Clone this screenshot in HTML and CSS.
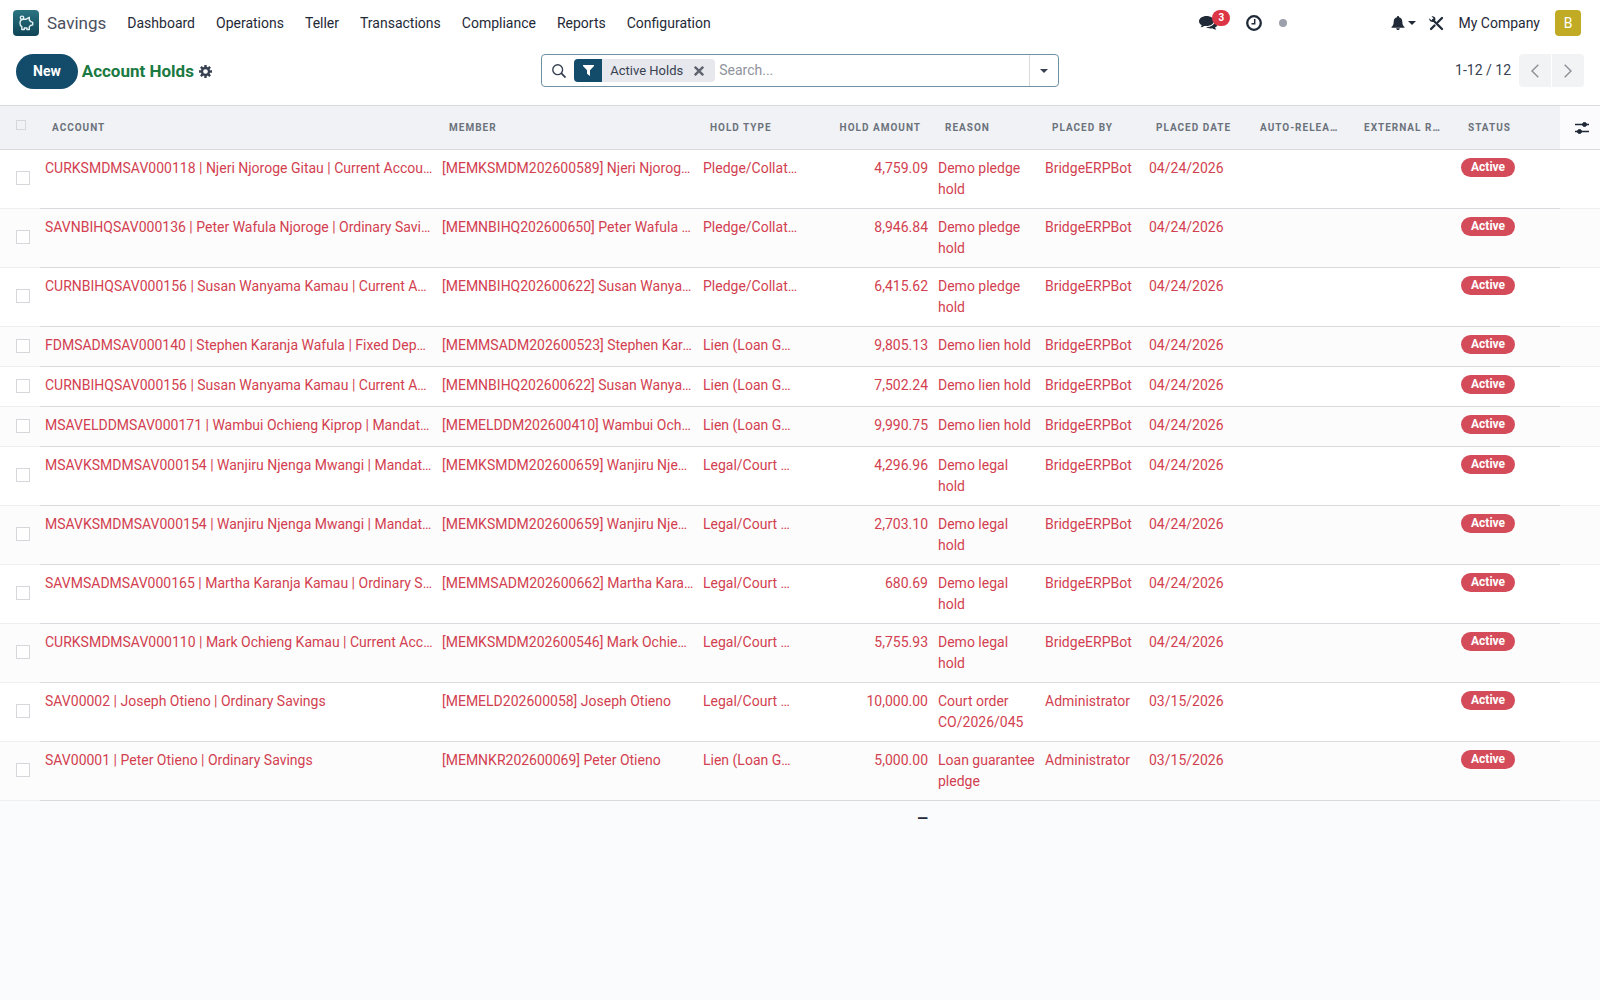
FILE: index.html
```html
<!DOCTYPE html>
<html lang="en">
<head>
    <meta charset="UTF-8">
    <meta name="viewport" content="width=device-width, initial-scale=1.0">
    <title>Account Holds - Savings</title>
    <link rel="stylesheet" href="styles.css">
</head>
<body>
    <header class="navbar">
        <a href="#" class="brand">
            <svg class="app-icon" width="26" height="26" viewBox="0 0 26 26">
                <defs><linearGradient id="app-bg" x1="0" y1="0" x2="0" y2="1"><stop offset="0" stop-color="#2a7481"/><stop offset="1" stop-color="#0f4456"/></linearGradient></defs>
                <rect width="26" height="26" rx="4" fill="url(#app-bg)"/>
                <g fill="none" stroke="#e3f1f3" stroke-width="1.4" stroke-linejoin="round" stroke-linecap="round">
                    <path d="M10.500 9.200h2.700l3.100-1.900v2.700l1.500 1.700 1.900.6v2.600l-2.200.6-1.200 1.400v2.600h-2.400v-1.500h-2.600v1.500H8.800v-2.800C7.600 15.900 7 14.700 7 13.200c0-2.300 1.500-4 3.500-4z"/>
                    <circle cx="9" cy="7.800" r="1.700"/>
                </g>
            </svg>
            <span>Savings</span>
        </a>
        <nav class="menu">
            <a href="#">Dashboard</a>
            <a href="#">Operations</a>
            <a href="#">Teller</a>
            <a href="#">Transactions</a>
            <a href="#">Compliance</a>
            <a href="#">Reports</a>
            <a href="#">Configuration</a>
        </nav>
        <div class="systray">
            <button class="icon-btn chat" aria-label="Messages">
                <svg width="19" height="16" viewBox="0 0 19 16" fill="#1f2937"><path d="M7.500 1C3.400 1 0 3.300 0 6.200c0 1.700 1.100 3.100 2.800 4-.2.800-.7 1.400-1.300 2 1.400-.1 2.700-.5 3.800-1.300.7.200 1.500.2 2.200.2 4.100 0 7.500-2.200 7.500-5S11.600 1 7.500 1z"/><path d="M16 5.200c0 4-3.700 6.800-8.900 7 1.400.9 3.800 1.500 6 1 1.300.8 2.500 1.300 4.200 1.400-.7-.6-1.100-1.200-1.300-2 1.500-.8 2.400-2 2.400-3.400 0-1.600-.9-3-2.400-4z"/></svg>
                <span class="count">3</span>
            </button>
            <button class="icon-btn clock" aria-label="Activities">
                <svg width="16" height="16" viewBox="0 0 16 16" fill="none" stroke="#1f2937"><circle cx="8" cy="8" r="6.800" stroke-width="2.300"/><path d="M8.700 4v4.800H5.500" stroke-width="1.500"/></svg>
            </button>
            <span class="dot"></span>
            <button class="icon-btn bell" aria-label="Notifications">
                <svg width="14" height="14" viewBox="0 0 14 14" fill="#1f2937"><path d="M7 0c.6 0 1 .4 1 1v.3c2 .4 3.300 2 3.300 4.200 0 2.700.6 4.200 2.200 5.500v.7H.5V11c1.600-1.300 2.200-2.800 2.200-5.500C2.700 3.300 4 1.700 6 1.300V1c0-.6.400-1 1-1zM5.200 12.200h3.600C8.700 13.300 8 14 7 14s-1.700-.7-1.800-1.800z"/></svg>
                <svg width="8" height="4" viewBox="0 0 8 4"><path d="M0 0h8L4 4z" fill="#1f2937"/></svg>
            </button>
            <button class="icon-btn tools" aria-label="Developer tools">
                <svg width="15" height="15" viewBox="0 0 15 15"><path d="M4 4l9 9M13 2L9 6M5.500 9.500L2 13" fill="none" stroke="#1f2937" stroke-width="2.300" stroke-linecap="round"/><path d="M.2 2.200L2.400 4.200 4 3.800 4.400 2.200 2.500.3c2-.6 4.200.8 4 3.300L4.700 6C2.200 6.400-.2 4.700.2 2.200z" fill="#1f2937"/></svg>
            </button>
            <button class="company">My Company</button>
            <button class="avatar" aria-label="User menu">B</button>
        </div>
    </header>

    <div class="control-panel">
        <div class="breadcrumb">
            <button class="new-btn">New</button>
            <h1>Account Holds</h1>
            <button class="icon-btn gear" aria-label="Actions">
                <svg width="13" height="13" viewBox="0 0 14 14"><g fill="none" stroke="#374151"><circle cx="7" cy="7" r="3.800" stroke-width="2.500"/><path d="M7 0v3M7 11v3M0 7h3M11 7h3M2 2l2.200 2.200M9.800 9.800L12 12M12 2L9.800 4.200M4.200 9.800L2 12" stroke-width="2.600"/></g></svg>
            </button>
        </div>
        <div class="search">
            <svg class="lens" width="14" height="14" viewBox="0 0 14 14" fill="none" stroke="#374151"><circle cx="5.700" cy="5.700" r="4.900" stroke-width="1.400"/><path d="M9.200 9.200l4.300 4.300" stroke-width="1.800"/></svg>
            <div class="facet">
                <span class="facet-icon"><svg width="11" height="11" viewBox="0 0 11 11" fill="#fff"><path d="M0 0h11v1L7 5.200V11L4 8.800V5.200L0 1z"/></svg></span>
                <span class="facet-label">Active Holds</span>
                <button class="icon-btn facet-remove" aria-label="Remove filter"><svg width="10" height="10" viewBox="0 0 10 10" stroke="#5f636f" stroke-width="2.400"><path d="M.8.8l8.400 8.400M9.200.8L.8 9.200"/></svg></button>
            </div>
            <input type="text" class="search-input" placeholder="Search..." aria-label="Search">
            <button class="search-toggle" aria-label="Toggle search panel"><svg width="8" height="4" viewBox="0 0 8 4" fill="#374151"><path d="M0 0h8L4 4z"/></svg></button>
        </div>
        <div class="pager">
            <span>1-12 / 12</span>
            <div class="pager-buttons">
                <button aria-label="Previous" disabled><svg width="8" height="14" viewBox="0 0 8 14"><path d="M7.300.7L1 7l6.300 6.300"/></svg></button>
                <button aria-label="Next" disabled><svg width="8" height="14" viewBox="0 0 8 14"><path d="M.7.7L7 7 .7 13.300"/></svg></button>
            </div>
        </div>
    </div>

    <table class="list">
        <colgroup>
            <col class="c-check"><col><col class="c-member"><col class="c-std"><col class="c-amount"><col class="c-reason">
            <col class="c-std"><col class="c-std"><col class="c-std"><col class="c-std"><col class="c-std"><col class="c-check">
        </colgroup>
        <thead>
            <tr>
                <th class="check"><input type="checkbox" aria-label="Select all"></th>
                <th>Account</th>
                <th>Member</th>
                <th>Hold Type</th>
                <th class="num">Hold Amount</th>
                <th>Reason</th>
                <th>Placed By</th>
                <th>Placed Date</th>
                <th>Auto-Release Date</th>
                <th>External Reference</th>
                <th>Status</th>
                <th class="options"><button class="icon-btn" aria-label="Optional columns"><svg width="14" height="12" viewBox="0 0 14 12" stroke="#1f2937" fill="#1f2937"><path d="M0 2.500h14M0 9.500h14" stroke-width="1.300"/><circle cx="9.500" cy="2.500" r="2"/><circle cx="4.500" cy="9.500" r="2"/></svg></button></th>
            </tr>
        </thead>
        <tbody id="rows"></tbody>
        <tfoot>
            <tr><td></td><td></td><td></td><td></td><td class="num">—</td><td colspan="7"></td></tr>
        </tfoot>
    </table>

    <script src="script.js"></script>
</body>
</html>
```
FILE: styles.css
```css
* { box-sizing: border-box; }
body {
    margin: 0;
    background: #fafbfd;
    color: #374151;
    font-family: Roboto, "Liberation Sans", sans-serif;
    font-size: 14px;
    line-height: 21px;
}
a { color: inherit; text-decoration: none; }
button, input { font: inherit; color: inherit; }
button {
    padding: 0;
    border: 0;
    background: none;
    cursor: pointer;
}
svg { display: block; }
.icon-btn {
    display: flex;
    align-items: center;
}

/* top bar */
.navbar {
    display: flex;
    align-items: center;
    height: 46px;
    padding: 0 19px 0 13px;
    background: #fff;
    color: #1f2937;
}
.brand {
    display: flex;
    align-items: center;
    gap: 8px;
    margin-right: 21px;
    font-size: 17px;
    color: #4b5060;
}
.menu {
    display: flex;
    gap: 21px;
}
.systray {
    display: flex;
    align-items: center;
    margin-left: auto;
}
.chat { position: relative; }
.count {
    position: absolute;
    left: 13px;
    top: -5px;
    width: 18px;
    height: 16px;
    border-radius: 8px;
    background: #dc3545;
    color: #fff;
    font-size: 10px;
    font-weight: 700;
    line-height: 16px;
    text-align: center;
}
.clock { margin-left: 28px; }
.dot {
    width: 8px;
    height: 8px;
    margin-left: 17px;
    border-radius: 50%;
    background: #9ca0ac;
}
.bell {
    gap: 3px;
    margin-left: 104px;
}
.tools { margin-left: 13px; }
.company { margin-left: 14px; }
.avatar {
    width: 26px;
    height: 26px;
    margin-left: 15px;
    border-radius: 4px;
    background: #c1ab24;
    color: #fff;
}

/* control panel */
.control-panel {
    display: grid;
    grid-template-columns: 1fr 33% 1fr;
    align-items: start;
    padding: 8px 16px 16px;
    background: #fff;
}
.breadcrumb {
    display: flex;
    align-items: center;
}
.new-btn {
    height: 35px;
    padding: 0 17px;
    border-radius: 18px;
    background: #134b6a;
    color: #fff;
    font-weight: 700;
}
h1 {
    margin: 0 5px 0 4px;
    font-size: 17px;
    font-weight: 700;
    color: #1a7a42;
}
.search {
    display: flex;
    align-items: center;
    height: 33px;
    border: 1px solid #6f91a3;
    border-radius: 4px;
}
.lens { margin: 0 8px 0 10px; }
.facet {
    display: flex;
    align-items: center;
    height: 23px;
    border-radius: 4px;
    background: #e7e8ed;
    overflow: hidden;
    font-size: 13px;
}
.facet-icon {
    display: flex;
    align-items: center;
    justify-content: center;
    width: 28px;
    height: 23px;
    background: #134b6a;
}
.facet-label { padding: 0 11px 0 8px; }
.facet-remove { margin-right: 11px; }
.search-input {
    flex: 1;
    min-width: 0;
    height: 31px;
    padding: 0 4px 2px;
    border: 0;
    outline: 0;
    background: none;
}
.search-input::placeholder { color: #8f939d; }
.search-toggle {
    display: flex;
    align-items: center;
    justify-content: center;
    width: 29px;
    height: 31px;
    border-left: 1px solid #d8dadd;
}
.pager {
    display: flex;
    align-items: center;
    justify-content: flex-end;
    gap: 8px;
}
.pager-buttons {
    display: flex;
    gap: 1px;
}
.pager button {
    display: flex;
    align-items: center;
    justify-content: center;
    width: 32px;
    height: 33px;
    background: #f2f3f4;
}
.pager button:first-child { border-radius: 4px 0 0 4px; }
.pager button:last-child { border-radius: 0 4px 4px 0; }
.pager path {
    fill: none;
    stroke: #8b8f96;
    stroke-width: 1.4;
}

/* list */
.list {
    width: 100%;
    table-layout: fixed;
    border-collapse: separate;
    border-spacing: 0;
    border-top: 1px solid #d8dadd;
}
.c-check { width: 40px; }
.c-member { width: 261px; }
.c-std { width: 104px; }
.c-amount { width: 131px; }
.c-reason { width: 107px; }
th {
    height: 44px;
    padding: 0 12px;
    border-bottom: 1px solid #d8dadd;
    background: #f0f2f6;
    color: #6c727c;
    font-size: 10px;
    font-weight: 700;
    letter-spacing: 1px;
    text-align: left;
    text-transform: uppercase;
    overflow: hidden;
    text-overflow: ellipsis;
    white-space: nowrap;
}
.list .num { text-align: right; }
.list .check {
    padding: 0 0 2px 16px;
    vertical-align: middle;
}
.list .options {
    padding: 0 0 0 15px;
    background: #fbfbfd;
}
input[type="checkbox"] {
    display: block;
    appearance: none;
    width: 14px;
    height: 14px;
    margin: 0;
    border: 1px solid #d5d7db;
    background: #fff;
}
th input[type="checkbox"] {
    width: 10px;
    height: 10px;
    margin-bottom: 4px;
    background: none;
}
tbody td {
    height: 40px;
    padding: 8px 4px 8px 5px;
    border-bottom: 1px solid #d8dadd;
    background: #fff;
    color: #d23f50;
    vertical-align: top;
}
tbody tr:nth-child(even) td { background: #fcfcfc; }
tbody td:first-child, tbody td:last-child { border-bottom-color: #eeeff0; }
td.num { padding-right: 5px; }
.cut {
    overflow: hidden;
    text-overflow: ellipsis;
    white-space: nowrap;
}
.badge {
    display: block;
    width: fit-content;
    padding: 0 10px;
    border-radius: 10px;
    background: #d44c5a;
    color: #fff;
    font-size: 12px;
    font-weight: 700;
    line-height: 19px;
}
tfoot td {
    padding: 7px 5px;
    color: #1f2937;
    font-weight: 700;
}
```
FILE: script.js
```js
const rows = [
    ["CURKSMDMSAV000118 | Njeri Njoroge Gitau | Current Account", "[MEMKSMDM202600589] Njeri Njoroge Gitau", "Pledge/Collateral", "4,759.09", "Demo pledge hold"],
    ["SAVNBIHQSAV000136 | Peter Wafula Njoroge | Ordinary Savings", "[MEMNBIHQ202600650] Peter Wafula Njoroge", "Pledge/Collateral", "8,946.84", "Demo pledge hold"],
    ["CURNBIHQSAV000156 | Susan Wanyama Kamau | Current Account", "[MEMNBIHQ202600622] Susan Wanyama Kamau", "Pledge/Collateral", "6,415.62", "Demo pledge hold"],
    ["FDMSADMSAV000140 | Stephen Karanja Wafula | Fixed Deposit", "[MEMMSADM202600523] Stephen Karanja Wafula", "Lien (Loan Guarantee)", "9,805.13", "Demo lien hold"],
    ["CURNBIHQSAV000156 | Susan Wanyama Kamau | Current Account", "[MEMNBIHQ202600622] Susan Wanyama Kamau", "Lien (Loan Guarantee)", "7,502.24", "Demo lien hold"],
    ["MSAVELDDMSAV000171 | Wambui Ochieng Kiprop | Mandatory Savings", "[MEMELDDM202600410] Wambui Ochieng Kiprop", "Lien (Loan Guarantee)", "9,990.75", "Demo lien hold"],
    ["MSAVKSMDMSAV000154 | Wanjiru Njenga Mwangi | Mandatory Savings", "[MEMKSMDM202600659] Wanjiru Njenga Mwangi", "Legal/Court Order", "4,296.96", "Demo legal hold"],
    ["MSAVKSMDMSAV000154 | Wanjiru Njenga Mwangi | Mandatory Savings", "[MEMKSMDM202600659] Wanjiru Njenga Mwangi", "Legal/Court Order", "2,703.10", "Demo legal hold"],
    ["SAVMSADMSAV000165 | Martha Karanja Kamau | Ordinary Savings", "[MEMMSADM202600662] Martha Karanja Kamau", "Legal/Court Order", "680.69", "Demo legal hold"],
    ["CURKSMDMSAV000110 | Mark Ochieng Kamau | Current Account", "[MEMKSMDM202600546] Mark Ochieng Kamau", "Legal/Court Order", "5,755.93", "Demo legal hold"],
    ["SAV00002 | Joseph Otieno | Ordinary Savings", "[MEMELD202600058] Joseph Otieno", "Legal/Court Order", "10,000.00", "Court order CO/2026/045", "Administrator", "03/15/2026"],
    ["SAV00001 | Peter Otieno | Ordinary Savings", "[MEMNKR202600069] Peter Otieno", "Lien (Loan Guarantee)", "5,000.00", "Loan guarantee pledge", "Administrator", "03/15/2026"]
];

document.getElementById("rows").innerHTML = rows.map(([account, member, type, amount, reason, by = "BridgeERPBot", date = "04/24/2026"]) => `
    <tr>
        <td class="check"><input type="checkbox" aria-label="Select ${account}"></td>
        <td class="cut">${account}</td>
        <td class="cut">${member}</td>
        <td class="cut">${type}</td>
        <td class="num">${amount}</td>
        <td>${reason}</td>
        <td class="cut">${by}</td>
        <td>${date}</td>
        <td></td>
        <td></td>
        <td><span class="badge">Active</span></td>
        <td></td>
    </tr>`).join("");
```
